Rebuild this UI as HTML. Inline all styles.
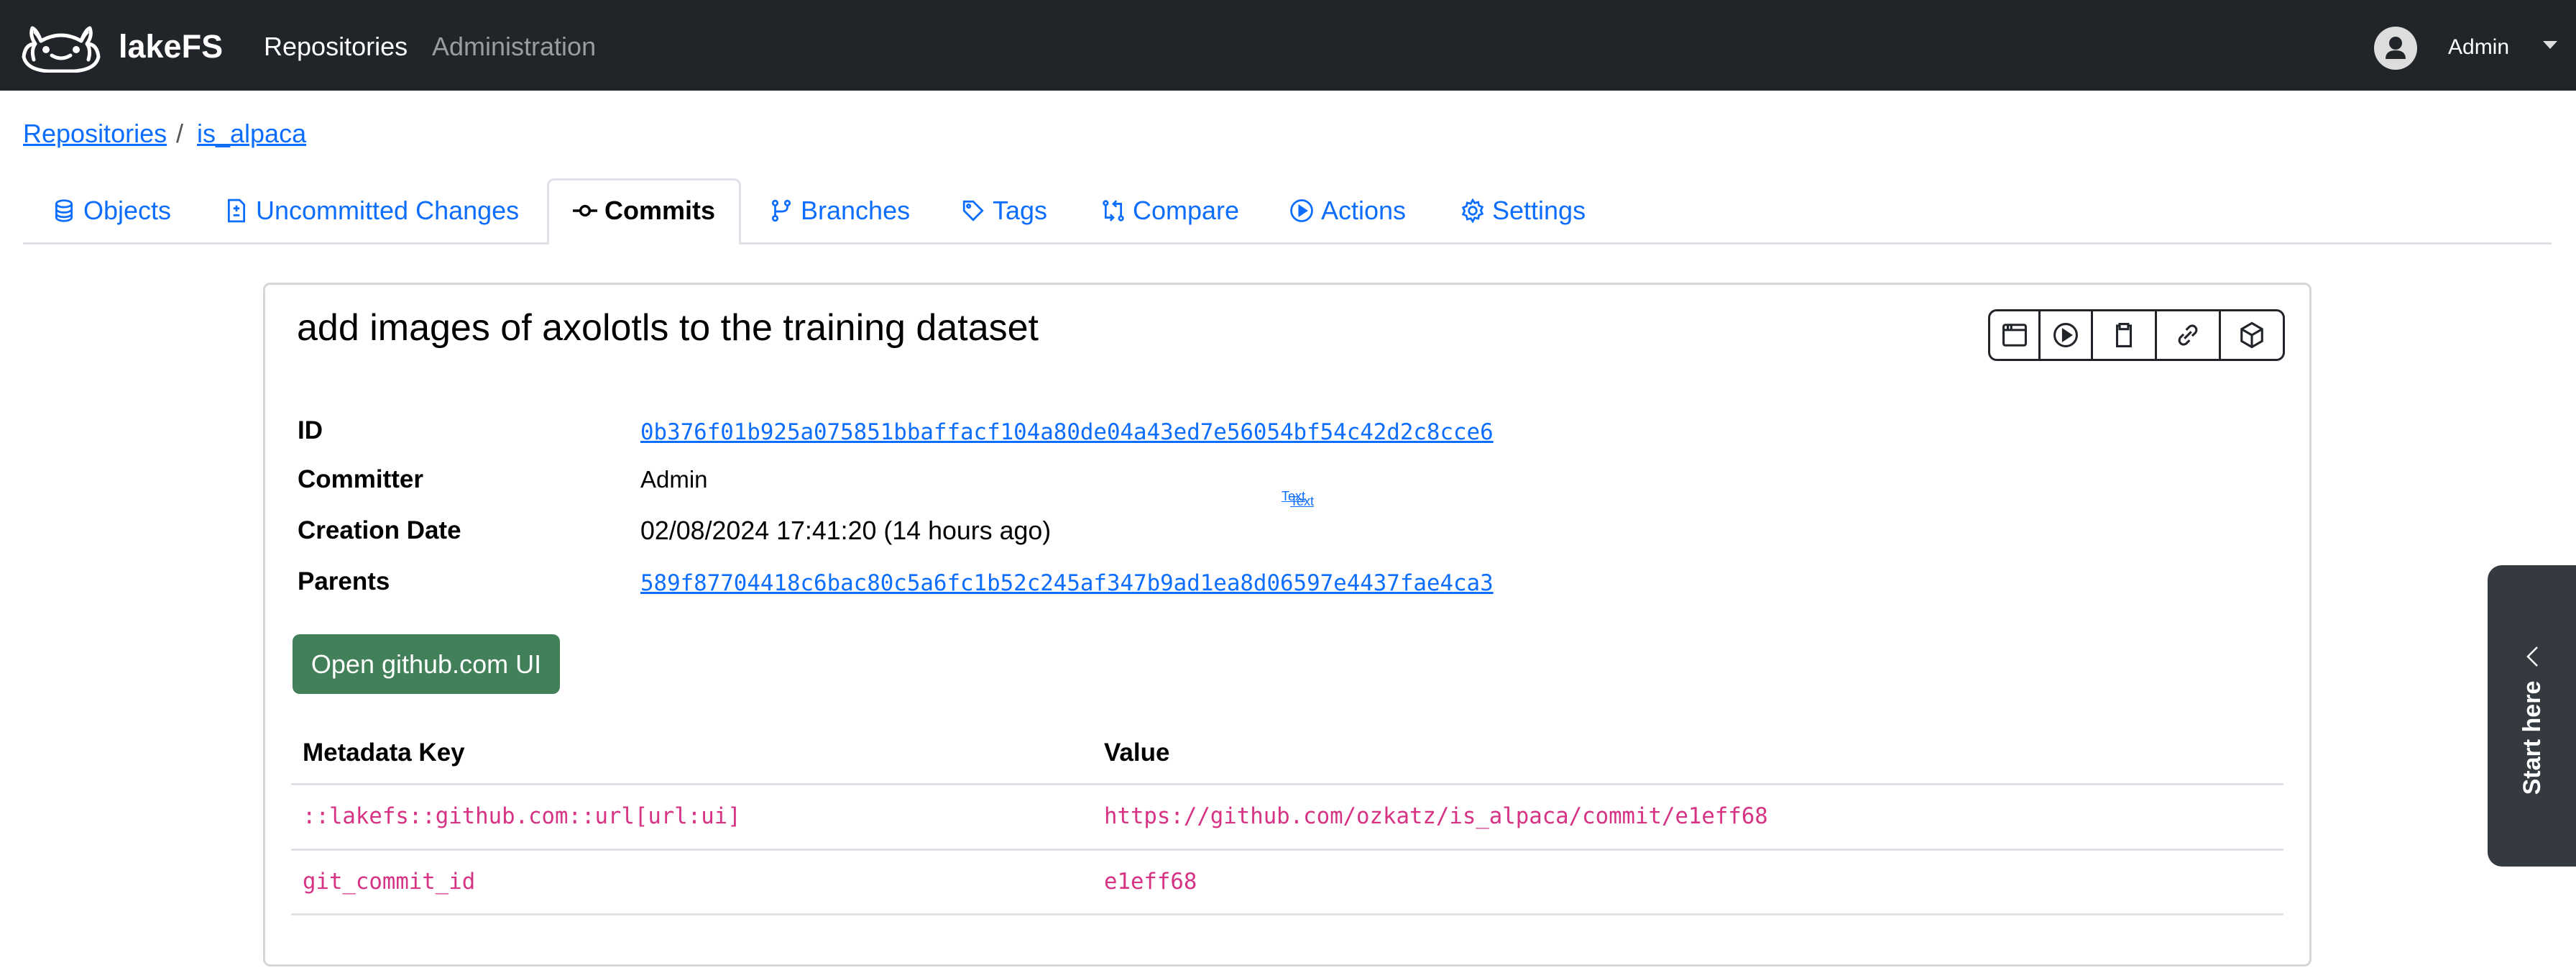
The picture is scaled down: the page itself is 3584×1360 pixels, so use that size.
<!DOCTYPE html>
<html><head><meta charset="utf-8"><style>
*{box-sizing:border-box;margin:0;padding:0}
body{width:3584px;height:1360px;background:#fff;font-family:"Liberation Sans",sans-serif;position:relative;overflow:hidden;color:#000}
.a{position:absolute;white-space:nowrap}
.nav{position:absolute;left:0;top:0;width:3584px;height:126px;background:#212529}
.blue{color:#0d6efd}
.tab{position:absolute;top:270px;font-size:36px;line-height:46px;color:#0d6efd;display:flex;align-items:center;gap:10px;white-space:nowrap}
.tab svg{width:34px;height:34px}
.lbl{position:absolute;left:414px;font-size:35px;font-weight:bold;line-height:40px}
.val{position:absolute;left:891px;font-size:35px;line-height:40px}
.mono{font-family:"DejaVu Sans Mono","Liberation Mono",monospace}
.code{color:#d63384;font-size:30.7px;font-family:"DejaVu Sans Mono","Liberation Mono",monospace}
.hr{position:absolute;left:405px;width:2772px;height:3px;background:#dee2e6}
</style></head><body>
<div class="nav"></div>
<svg class="a" style="left:27px;top:35px" width="116" height="66" viewBox="0 0 116 66" fill="none" stroke="#fff" stroke-width="5" stroke-linecap="round" stroke-linejoin="round">
<path d="M30 22 Q24 6 18 4 Q14 14 22 26 Q8 26 6 44 Q10 62 40 64 L76 64 Q106 62 110 44 Q108 26 94 26 Q102 14 98 4 Q92 6 86 22 Q72 14 58 14 Q44 14 30 22Z"/>
<path d="M22 26 Q16 34 20 48 M94 26 Q100 34 96 48 M30 22 Q26 14 22 10 M86 22 Q90 14 94 10"/>
<circle cx="37" cy="34" r="2.5" fill="#fff"/><circle cx="79" cy="34" r="2.5" fill="#fff"/>
<path d="M45 42 Q58 50 71 42"/>
</svg>
<div class="a" style="left:165px;top:40px;font-size:45px;font-weight:bold;color:#fff;line-height:50px">lakeFS</div>
<div class="a" style="left:367px;top:44px;font-size:36px;color:#fff;line-height:42px">Repositories</div>
<div class="a" style="left:601px;top:44px;font-size:36px;color:#9a9da0;line-height:42px">Administration</div>
<svg class="a" style="left:3303px;top:37px" width="60" height="60" viewBox="0 0 60 60"><circle cx="30" cy="30" r="30" fill="#ddd"/><circle cx="30" cy="23" r="9" fill="#212529"/><path d="M16 45 Q16 33 30 33 Q44 33 44 45 Z" fill="#212529"/></svg>
<div class="a" style="left:3406px;top:48px;font-size:30px;color:#fff;line-height:36px">Admin</div>
<svg class="a" style="left:3538px;top:57px" width="20" height="11"><path d="M0 0 L20 0 L10 11Z" fill="#ddd"/></svg>

<div class="a blue" style="left:32px;top:165px;font-size:36px;line-height:42px;text-decoration:underline">Repositories</div>
<div class="a" style="left:245px;top:165px;font-size:36px;line-height:42px;color:#555">/</div>
<div class="a blue" style="left:274px;top:165px;font-size:36px;line-height:42px;text-decoration:underline">is_alpaca</div>

<div class="a" style="left:32px;top:337px;width:3518px;height:3px;background:#dee2e6"></div>
<div class="a" style="left:761px;top:248px;width:270px;height:92px;border:3px solid #dee2e6;border-bottom:none;border-radius:10px 10px 0 0;background:#fff"></div>
<div class="tab" style="left:72px"><svg viewBox="0 0 16 16" fill="none" stroke="#0d6efd" stroke-width="1.3"><ellipse cx="8" cy="3.5" rx="5" ry="2.2"/><path d="M3 3.5v9c0 1.2 2.2 2.2 5 2.2s5-1 5-2.2v-9M3 7c0 1.2 2.2 2.2 5 2.2S13 8.2 13 7M3 10c0 1.2 2.2 2.2 5 2.2s5-1 5-2.2"/></svg>Objects</div>
<div class="tab" style="left:312px"><svg viewBox="0 0 16 16" fill="none" stroke="#0d6efd" stroke-width="1.3"><path d="M3 1h7l3 3v11H3z M8 4.5v4M6 6.5h4M6 11h4"/></svg>Uncommitted Changes</div>
<div class="tab" style="left:797px;color:#000;font-weight:bold"><svg viewBox="0 0 16 16" fill="none" stroke="#000" stroke-width="1.6"><circle cx="8" cy="8" r="3"/><path d="M0 8h5M11 8h5"/></svg>Commits</div>
<div class="tab" style="left:1070px"><svg viewBox="0 0 16 16" fill="none" stroke="#0d6efd" stroke-width="1.3"><circle cx="4" cy="3" r="1.5"/><circle cx="4" cy="13" r="1.5"/><circle cx="12" cy="3" r="1.5"/><path d="M4 4.5v7M12 4.5v1q0 3-4 3H4"/></svg>Branches</div>
<div class="tab" style="left:1337px"><svg viewBox="0 0 16 16" fill="none" stroke="#0d6efd" stroke-width="1.3"><path d="M2 2h6l6 6-6 6-6-6z"/><circle cx="5" cy="5" r="1"/></svg>Tags</div>
<div class="tab" style="left:1532px"><svg viewBox="0 0 16 16" fill="none" stroke="#0d6efd" stroke-width="1.3"><circle cx="3" cy="3" r="1.3"/><circle cx="13" cy="13" r="1.3"/><path d="M3 4.5v8h5M6 10.5l2 2-2 2M13 11.5v-8H8M10 1.5l-2 2 2 2"/></svg>Compare</div>
<div class="tab" style="left:1794px"><svg viewBox="0 0 16 16" fill="none" stroke="#0d6efd" stroke-width="1.3"><circle cx="8" cy="8" r="6.8"/><path d="M6.5 5v6l4.5-3z" fill="#0d6efd"/></svg>Actions</div>
<div class="tab" style="left:2032px"><svg viewBox="0 0 16 16" fill="none" stroke="#0d6efd" stroke-width="1.3"><circle cx="8" cy="8" r="2.5"/><path d="M8 1l1.3 2 2.3-.6.5 2.3 2.2.9-1 2.2 1 2.2-2.2.9-.5 2.3-2.3-.6L8 15l-1.3-2-2.3.6-.5-2.3-2.2-.9 1-2.2-1-2.2 2.2-.9.5-2.3 2.3.6z"/></svg>Settings</div>

<div class="a" style="left:366px;top:393px;width:2850px;height:951px;border:3px solid #d6d6d6;border-radius:10px"></div>
<div class="a" style="left:413px;top:425px;font-size:52px;line-height:62px">add images of axolotls to the training dataset</div>

<div class="a" style="left:2766px;top:430px;width:413px;height:72px;border:3px solid #212529;border-radius:12px"></div>
<div class="a" style="left:2836px;top:430px;width:3px;height:72px;background:#212529"></div>
<div class="a" style="left:2909px;top:430px;width:3px;height:72px;background:#212529"></div>
<div class="a" style="left:2998px;top:430px;width:3px;height:72px;background:#212529"></div>
<div class="a" style="left:3087px;top:430px;width:3px;height:72px;background:#212529"></div>
<svg class="a" style="left:2784px;top:447px" width="38" height="38" viewBox="0 0 16 16" fill="none" stroke="#212529" stroke-width="1.3"><rect x="1.5" y="2" width="13" height="12" rx="1"/><path d="M1.5 5h13M4 2v3M6 2v3"/></svg>
<svg class="a" style="left:2855px;top:447px" width="38" height="38" viewBox="0 0 16 16" fill="none" stroke="#212529" stroke-width="1.3"><circle cx="8" cy="8" r="6.5"/><path d="M6.5 5v6l4.5-3z" fill="#212529"/></svg>
<svg class="a" style="left:2936px;top:447px" width="38" height="38" viewBox="0 0 16 16" fill="none" stroke="#212529" stroke-width="1.3"><path d="M5 2.5H4v12h8v-12h-1"/><rect x="5.5" y="1.5" width="5" height="3"/></svg>
<svg class="a" style="left:3025px;top:447px" width="38" height="38" viewBox="0 0 16 16" fill="none" stroke="#212529" stroke-width="1.3"><path d="M7 5l2-2a2.5 2.5 0 0 1 3.5 3.5l-2 2M9 11l-2 2a2.5 2.5 0 0 1-3.5-3.5l2-2M6 10l4-4"/></svg>
<svg class="a" style="left:3114px;top:447px" width="38" height="38" viewBox="0 0 16 16" fill="none" stroke="#212529" stroke-width="1.3"><path d="M8 1l6 3.5v7L8 15 2 11.5v-7zM2 4.5L8 8l6-3.5M8 8v7"/></svg>

<div class="lbl" style="top:579px">ID</div>
<div class="lbl" style="top:647px">Committer</div>
<div class="lbl" style="top:718px">Creation Date</div>
<div class="lbl" style="top:789px">Parents</div>
<div class="val mono blue" style="top:581px;font-size:30.8px;text-decoration:underline">0b376f01b925a075851bbaffacf104a80de04a43ed7e56054bf54c42d2c8cce6</div>
<div class="val" style="top:647px;font-size:33px">Admin</div>
<div class="val" style="top:718px;font-size:35.8px">02/08/2024 17:41:20 (14 hours ago)</div>
<div class="val mono blue" style="top:791px;font-size:30.8px;text-decoration:underline">589f87704418c6bac80c5a6fc1b52c245af347b9ad1ea8d06597e4437fae4ca3</div>
<div class="a blue" style="left:1783px;top:680px;font-size:18px;text-decoration:underline">Text</div>
<div class="a blue" style="left:1795px;top:687px;font-size:18px;text-decoration:underline">Text</div>

<div class="a" style="left:407px;top:882px;width:372px;height:83px;background:#428059;border-radius:10px;color:#fff;font-size:36px;line-height:83px;text-align:center">Open github.com UI</div>

<div class="a" style="left:421px;top:1026px;font-size:35px;font-weight:bold;line-height:42px">Metadata Key</div>
<div class="a" style="left:1536px;top:1026px;font-size:35px;font-weight:bold;line-height:42px">Value</div>
<div class="hr" style="top:1089px"></div>
<div class="a code" style="left:421px;top:1118px;line-height:36px">::lakefs::github.com::url[url:ui]</div>
<div class="a code" style="left:1536px;top:1118px;line-height:36px">https://github.com/ozkatz/is_alpaca/commit/e1eff68</div>
<div class="hr" style="top:1180px"></div>
<div class="a code" style="left:421px;top:1209px;line-height:36px">git_commit_id</div>
<div class="a code" style="left:1536px;top:1209px;line-height:36px">e1eff68</div>
<div class="hr" style="top:1270px"></div>

<div class="a" style="left:3461px;top:786px;width:130px;height:419px;background:#343a40;border-radius:20px 0 0 20px"></div>
<svg class="a" style="left:3514px;top:898px" width="18" height="30"><path d="M16 2 L3 15 L16 28" stroke="#fff" stroke-width="2.5" fill="none"/></svg>
<div class="a" style="left:3523px;top:1026px;transform:translate(-50%,-50%) rotate(-90deg);color:#fff;font-size:34px;font-weight:bold;line-height:40px">Start here</div>
</body></html>
